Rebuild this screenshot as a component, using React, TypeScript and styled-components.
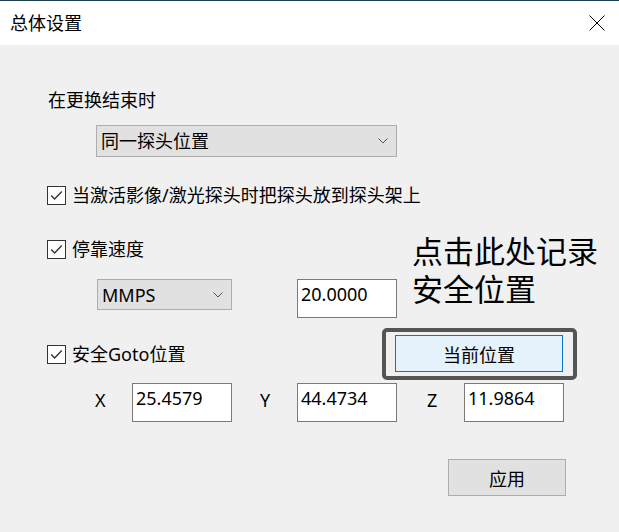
import React from 'react';
import styled, { createGlobalStyle } from 'styled-components';

const Global = createGlobalStyle`
  html, body { margin: 0; padding: 0; background: #f0f0f0; }
  * { box-sizing: border-box; }
`;

const FONT = `"Noto Sans", "Noto Sans CJK SC", sans-serif`;

const Window = styled.div`
  position: relative;
  width: 619px;
  height: 532px;
  overflow: hidden;
  background: #f0f0f0;
  font-family: ${FONT};
  font-size: 18px;
  line-height: 24px;
  color: #000;
`;

const TitleBar = styled.header`
  height: 45px;
  border-top: 1px solid #1d4150;
  background: #fff;
  display: flex;
  align-items: center;
  justify-content: space-between;
  padding: 0 14px 0 10px;
`;

const Title = styled.span`
  font-size: 18px;
`;

const CloseIcon = styled.svg`
  width: 16px;
  height: 16px;
  display: block;
`;

const Body = styled.main`
  display: flex;
  flex-direction: column;
  padding-left: 48px;
`;

const Label = styled.div<{ $mt?: number }>`
  margin-top: ${(p) => p.$mt ?? 0}px;
  height: 24px;
`;

const Combo = styled.div<{ $w: number; $h: number; $ml: number; $mt?: number }>`
  display: flex;
  align-items: center;
  justify-content: space-between;
  width: ${(p) => p.$w}px;
  height: ${(p) => p.$h}px;
  margin-left: ${(p) => p.$ml}px;
  margin-top: ${(p) => p.$mt ?? 0}px;
  padding: 0 8px 0 4px;
  background: #e1e1e1;
  border: 1px solid #adadad;
`;

const Chevron = styled.svg`
  width: 10px;
  height: 6px;
  display: block;
`;

const CheckRow = styled.label<{ $mt?: number }>`
  display: flex;
  align-items: center;
  gap: 6px;
  height: 24px;
  margin-left: -1px;
  margin-top: ${(p) => p.$mt ?? 0}px;
`;

const Box = styled.span`
  width: 19px;
  height: 19px;
  border: 1px solid #333;
  background: #fff;
  display: flex;
  align-items: center;
  justify-content: center;
`;

const Row = styled.div<{ $mt: number; $h: number }>`
  display: flex;
  align-items: flex-start;
  margin-top: ${(p) => p.$mt}px;
  height: ${(p) => p.$h}px;
`;

const CenterRow = styled(Row)`
  align-items: center;
`;

const Field = styled.div<{ $ml: number }>`
  width: 100px;
  height: 39px;
  margin-left: ${(p) => p.$ml}px;
  padding: 2px 3px;
  background: #fff;
  border: 1px solid #7a7a7a;
`;

const AxisLabel = styled.span<{ $ml: number }>`
  width: 37px;
  margin-left: ${(p) => p.$ml}px;
  margin-top: 5px;
`;

const Frame = styled.div`
  margin-left: auto;
  margin-right: 42px;
  width: 195px;
  height: 52px;
  border: 4px solid #555;
  border-radius: 5px;
  padding: 3px 10px 4px 9px;
`;

const Button = styled.button<{ $primary?: boolean; $w?: number; $ml?: number }>`
  display: flex;
  align-items: center;
  justify-content: center;
  width: ${(p) => (p.$w ? `${p.$w}px` : '100%')};
  height: 37px;
  margin: 0 0 0 ${(p) => p.$ml ?? 0}px;
  padding: 0;
  font-family: ${FONT};
  font-size: 18px;
  color: #000;
  background: ${(p) => (p.$primary ? '#e5f1fb' : '#e1e1e1')};
  border: 1px solid ${(p) => (p.$primary ? '#0078d7' : '#adadad')};
`;

const Annotation = styled.div`
  position: absolute;
  left: 412px;
  top: 231px;
  display: flex;
  flex-direction: column;
  font-family: "Noto Sans CJK SC", sans-serif;
  font-size: 31px;
  font-weight: 400;
  color: #000;
`;

const AnnotationLine = styled.div`
  height: 38px;
  line-height: 38px;
  overflow: visible;
  white-space: nowrap;
`;

const ChevronIcon = () => (
  <Chevron viewBox="0 0 10 6">
    <path d="M0.5 0.5 L5 5 L9.5 0.5" fill="none" stroke="#555" strokeWidth="1" />
  </Chevron>
);

const Check = ({ children, mt }: { children: React.ReactNode; mt?: number }) => (
  <CheckRow $mt={mt}>
    <Box>
      <svg width="15" height="15" viewBox="0 0 15 15">
        <path d="M2.2 7.6 L5.6 11 L12.8 3.6" fill="none" stroke="#333" strokeWidth="1.4" />
      </svg>
    </Box>
    <span>{children}</span>
  </CheckRow>
);

export default function App() {
  return (
    <Window>
      <Global />
      <TitleBar>
        <Title>总体设置</Title>
        <CloseIcon viewBox="0 0 16 16">
          <path d="M0.5 0.5 L15.5 15.5 M15.5 0.5 L0.5 15.5" stroke="#000" strokeWidth="1" />
        </CloseIcon>
      </TitleBar>
      <Body>
        <Label $mt={43}>在更换结束时</Label>
        <Combo $w={301} $h={32} $ml={48} $mt={13}>
          <span>同一探头位置</span>
          <ChevronIcon />
        </Combo>
        <Check mt={26}>当激活影像/激光探头时把探头放到探头架上</Check>
        <Check mt={30}>停靠速度</Check>
        <Row $mt={18} $h={38}>
          <Combo $w={135} $h={31} $ml={49}>
            <span>MMPS</span>
            <ChevronIcon />
          </Combo>
          <Field $ml={65}>20.0000</Field>
        </Row>
        <CenterRow $mt={11} $h={52}>
          <Check>安全Goto位置</Check>
          <Frame>
            <Button $primary>当前位置</Button>
          </Frame>
        </CenterRow>
        <Row $mt={3} $h={39}>
          <AxisLabel $ml={47}>X</AxisLabel>
          <Field $ml={0}>25.4579</Field>
          <AxisLabel $ml={28}>Y</AxisLabel>
          <Field $ml={0}>44.4734</Field>
          <AxisLabel $ml={30}>Z</AxisLabel>
          <Field $ml={0}>11.9864</Field>
        </Row>
        <Row $mt={37} $h={37}>
          <Button $w={118} $ml={400}>应用</Button>
        </Row>
      </Body>
      <Annotation>
        <AnnotationLine>点击此处记录</AnnotationLine>
        <AnnotationLine>安全位置</AnnotationLine>
      </Annotation>
    </Window>
  );
}
